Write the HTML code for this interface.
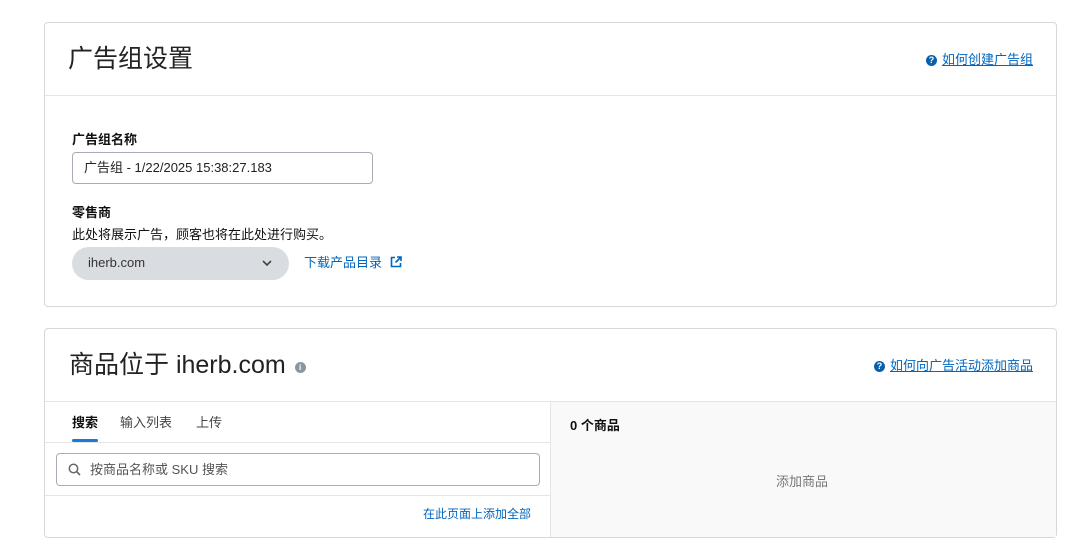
<!DOCTYPE html>
<html><head><meta charset="utf-8"><style>
*{box-sizing:border-box;margin:0;padding:0}
body{width:1080px;height:522px;background:#fff;font-family:"Liberation Sans","Noto Sans CJK SC",sans-serif;color:#111;position:relative;overflow:hidden}
.card{position:absolute;left:44px;width:1013px;border:1px solid #d5d9d9;border-radius:4px;background:#fff}
.abs{position:absolute}
.link{color:#0066c0;text-decoration:underline;font-size:13px}
.q{display:inline-block;width:11px;height:11px;border-radius:50%;background:#0b5fa8;color:#fff;font-size:9px;font-weight:bold;text-align:center;line-height:11px;vertical-align:1px;margin-right:5px}
</style></head><body>
<div class="card" style="top:22px;height:285px">
  <div class="abs" style="left:23px;top:16px;font-size:25px;color:#222">广告组设置</div>
  <div class="abs" style="right:23px;top:26px"><span class="q">?</span><span class="link">如何创建广告组</span></div>
  <div class="abs" style="left:0;right:0;top:72px;border-top:1px solid #e3e6e6"></div>
  <div class="abs" style="left:27px;top:106px;font-size:13px;font-weight:bold">广告组名称</div>
  <div class="abs" style="left:27px;top:129px;width:301px;height:32px;border:1px solid #a6adb5;border-radius:4px;font-size:13px;padding:4px 0 0 11px;color:#222">广告组 - 1/22/2025 15:38:27.183</div>
  <div class="abs" style="left:27px;top:179px;font-size:13px;font-weight:bold">零售商</div>
  <div class="abs" style="left:27px;top:201px;font-size:13px">此处将展示广告，顾客也将在此处进行购买。</div>
  <div class="abs" style="left:27px;top:224px;width:217px;height:33px;border-radius:17px;background:#d9dce1;font-size:13px;padding:8px 0 0 16px;color:#333">iherb.com
    <svg class="abs" style="right:16px;top:12px" width="12" height="8" viewBox="0 0 12 8"><path d="M2 2l4 4 4-4" stroke="#444" stroke-width="1.6" fill="none"/></svg></div>
  <div class="abs" style="left:259px;top:229px;font-size:13px;color:#0066c0">下载产品目录
    <svg style="vertical-align:-1px;margin-left:4px" width="12" height="12" viewBox="0 0 12 12"><path d="M5 1.5H1.5v9h9V7M7 1h4v4M11 1L5.5 6.5" stroke="#0066c0" stroke-width="1.6" fill="none"/></svg></div>
</div>
<div class="card" style="top:328px;height:210px">
  <div class="abs" style="left:24px;top:16px;font-size:25px;color:#222">商品位于 iherb.com <span style="display:inline-block;width:11px;height:11px;border-radius:50%;background:#8d96a0;vertical-align:3px;margin-left:2px;color:#fff;font-size:8px;font-weight:bold;text-align:center;line-height:11px">i</span></div>
  <div class="abs" style="right:23px;top:26px"><span class="q">?</span><span class="link">如何向广告活动添加商品</span></div>
  <div class="abs" style="left:0;right:0;top:72px;border-top:1px solid #e3e6e6"></div>
  <div class="abs" style="left:505px;right:0;top:73px;bottom:0;background:#f9f9f9;border-left:1px solid #e3e6e6"></div>
  <div class="abs" style="left:27px;top:83px;font-size:13px;font-weight:bold">搜索</div>
  <div class="abs" style="left:75px;top:83px;font-size:13px;color:#444">输入列表</div>
  <div class="abs" style="left:151px;top:83px;font-size:13px;color:#444">上传</div>
  <div class="abs" style="left:27px;top:110px;width:26px;height:3px;background:#1a7ad3;border-radius:2px"></div>
  <div class="abs" style="left:0;width:505px;top:113px;border-top:1px solid #e3e6e6"></div>
  <div class="abs" style="left:11px;top:124px;width:484px;height:33px;border:1px solid #a6adb5;border-radius:4px;font-size:13px;padding:5px 0 0 33px;color:#555">按商品名称或 SKU 搜索
    <svg class="abs" style="left:11px;top:9px" width="13" height="13" viewBox="0 0 13 13"><circle cx="5.5" cy="5.5" r="4.2" stroke="#666" stroke-width="1.5" fill="none"/><path d="M8.5 8.5l3.5 3.5" stroke="#666" stroke-width="1.6"/></svg></div>
  <div class="abs" style="left:0;width:505px;top:166px;border-top:1px solid #e3e6e6"></div>
  <div class="abs" style="right:525px;top:176px;font-size:12px;color:#0066c0">在此页面上添加全部</div>
  <div class="abs" style="left:525px;top:86px;font-size:13px;font-weight:bold">0 个商品</div>
  <div class="abs" style="left:731px;top:142px;font-size:13px;color:#777">添加商品</div>
</div>
</body></html>
